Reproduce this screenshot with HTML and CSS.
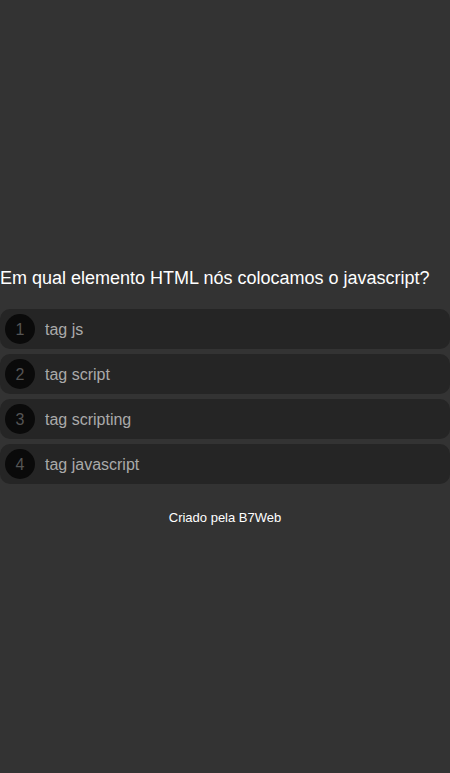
FILE: index.html
```html
<!DOCTYPE html>
<html lang="pt-BR">
<head>
<meta charset="utf-8">
<title>Quiz</title>
<link rel="stylesheet" href="styles.css">
</head>
<body>
<main class="quiz">
  <h1 class="question">Em qual elemento HTML nós colocamos o javascript?</h1>
  <div class="options">
    <div class="option"><span class="prefix">1</span><span class="label">tag js</span></div>
    <div class="option"><span class="prefix">2</span><span class="label">tag script</span></div>
    <div class="option"><span class="prefix">3</span><span class="label">tag scripting</span></div>
    <div class="option"><span class="prefix">4</span><span class="label">tag javascript</span></div>
  </div>
  <footer class="footer">Criado pela B7Web</footer>
</main>
</body>
</html>
```
FILE: styles.css
```css
html, body {
  margin: 0;
  padding: 0;
  background: #333333;
  height: 100%;
}
body {
  font-family: "Liberation Sans", Arial, sans-serif;
  color: #ffffff;
}
.quiz {
  padding-top: 268px;
}
.question {
  margin: 0 0 20px 0;
  font-size: 18px;
  font-weight: normal;
  line-height: 21px;
  color: #ffffff;
}
.options {
  display: flex;
  flex-direction: column;
  gap: 5px;
}
.option {
  display: flex;
  align-items: center;
  height: 40px;
  padding: 0 5px;
  box-sizing: border-box;
  background: #252525;
  border-radius: 10px;
}
.prefix {
  width: 30px;
  height: 30px;
  border-radius: 50%;
  background: #0a0a0a;
  color: #555555;
  font-size: 16px;
  line-height: 18px;
  padding-top: 2px;
  box-sizing: border-box;
  display: flex;
  align-items: center;
  justify-content: center;
  margin-right: 10px;
  flex-shrink: 0;
}
.label {
  font-size: 16px;
  line-height: 18px;
  padding-top: 2px;
  color: #aaaaaa;
}
.footer {
  margin-top: 26px;
  text-align: center;
  font-size: 13px;
  line-height: 15px;
  color: #ffffff;
}
```
